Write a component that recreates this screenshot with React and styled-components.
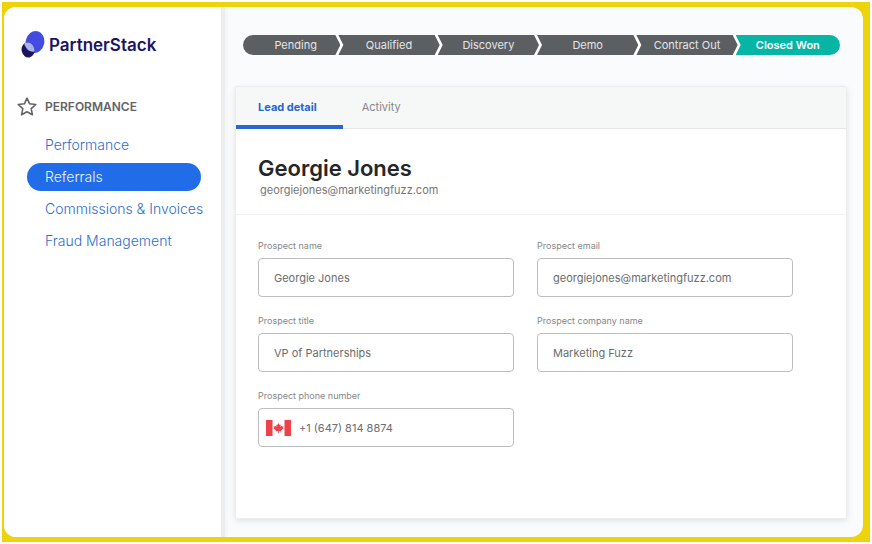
import { useState } from "react";
import styled, { createGlobalStyle } from "styled-components";

const GlobalStyle = createGlobalStyle`
  *, *::before, *::after { box-sizing: border-box; }
  body { margin: 0; background: #fff; font-family: Inter, "Liberation Sans", sans-serif; }
  button, input { font-family: inherit; }
`;

const Frame = styled.div`
  display: flex;
  min-height: calc(100vh - 4px);
  margin: 2px;
  padding: 5px 7px 5px 2px;
  background: #edd30c;
`;

const Shell = styled.div`
  flex: 1;
  display: flex;
  border-radius: 12px;
  overflow: hidden;
  background: #fafbfd;
`;

const Sidebar = styled.aside`
  flex: 0 0 221px;
  min-width: 0;
  padding: 24px 20px 24px 13px;
  background: #fff;
  border-right: 4px solid #ecedee;
  box-shadow: 0 0 6px rgba(0, 0, 0, 0.06);
`;

const Brand = styled.a`
  display: flex;
  align-items: center;
  gap: 4px;
  margin-left: 4px;
  color: #1b1464;
  font-size: 17px;
  font-weight: 600;
  line-height: 26px;
  text-decoration: none;
`;

const SectionTitle = styled.h2`
  display: flex;
  align-items: center;
  gap: 8px;
  margin: 39px 0 0;
  color: #636465;
  font-size: 12px;
  font-weight: 600;
  line-height: 20px;
`;

const NavList = styled.ul`
  display: flex;
  flex-direction: column;
  gap: 4px;
  margin: 14px 0 0;
  padding: 0 0 0 10px;
  list-style: none;
`;

const NavLink = styled.a`
  display: block;
  padding: 0 0 0 18px;
  border-radius: 14px;
  background: ${(p) => (p.$active ? "#216de9" : "transparent")};
  color: ${(p) => (p.$active ? "#eef4ff" : "#2e6ecb")};
  font-size: 14px;
  font-weight: 300;
  line-height: 28px;
  white-space: nowrap;
  text-decoration: none;
`;

const Main = styled.main`
  flex: 1;
  min-width: 0;
  display: flex;
  flex-direction: column;
  gap: 31px;
  padding: 28px 16px 18px 10px;
`;

const Steps = styled.ol`
  display: flex;
  margin: 0 7px 0 8px;
  padding: 0;
  border-radius: 10px;
  overflow: hidden;
  background: #fff;
  list-style: none;
`;

const Step = styled.li`
  flex: 102 1 0;
  margin-left: -2px;
  background: ${(p) => (p.$won ? "#07b5a5" : "#5c5f62")};
  color: ${(p) => (p.$won ? "#fff" : "#e4e5e6")};
  font-size: 11px;
  font-weight: ${(p) => (p.$won ? 600 : 400)};
  line-height: 20px;
  text-align: center;
  white-space: nowrap;
  clip-path: polygon(0 0, calc(100% - 5px) 0, 100% 50%, calc(100% - 5px) 100%, 0 100%, 5px 50%);

  &:first-child {
    flex-grow: 98;
    margin-left: 0;
    text-indent: 8px;
    clip-path: polygon(0 0, calc(100% - 5px) 0, 100% 50%, calc(100% - 5px) 100%, 0 100%);
  }
  &:last-child {
    flex-grow: 105;
    clip-path: polygon(0 0, 100% 0, 100% 100%, 0 100%, 5px 50%);
  }
`;

const Card = styled.section`
  flex: 1;
  border: 1px solid #eceded;
  border-radius: 2px;
  background: #fff;
  box-shadow: 0 2px 6px rgba(0, 0, 0, 0.1);
`;

const Tabs = styled.div`
  display: flex;
  border-bottom: 1px solid #e6e7e8;
  background: #f6f7f7;
`;

const Tab = styled.button`
  height: 42px;
  margin: 0 0 -1px;
  padding: 1px ${(p) => (p.$active ? 26 : 19)}px 0 ${(p) => (p.$active ? 22 : 19)}px;
  border: 0;
  border-bottom: 4px solid ${(p) => (p.$active ? "#2a66cf" : "transparent")};
  background: none;
  color: ${(p) => (p.$active ? "#2a66cf" : "#868788")};
  font-size: 11px;
  font-weight: ${(p) => (p.$active ? 700 : 400)};
`;

const LeadHeader = styled.header`
  padding: 25px 22px 16px;
  border-bottom: 1px solid #f0f1f1;
`;

const LeadName = styled.h1`
  margin: 0;
  color: #252627;
  font-size: 22px;
  font-weight: 600;
  line-height: 28px;
`;

const LeadEmail = styled.p`
  margin: 0;
  padding-left: 2px;
  color: #757677;
  font-size: 11px;
  line-height: 16px;
`;

const Form = styled.form`
  display: grid;
  grid-template-columns: 1fr 1fr;
  gap: 18px 23px;
  padding: 25px 53px 24px 22px;
`;

const Field = styled.div`
  display: flex;
  flex-direction: column;
  gap: 6px;
`;

const Label = styled.label`
  color: #858687;
  font-size: 9px;
  line-height: 12px;
`;

const InputBox = styled.div`
  display: flex;
  align-items: center;
  gap: 8px;
  height: 39px;
  padding: 0 15px 0 ${(p) => (p.$withFlag ? 7 : 15)}px;
  border: 1px solid #bcbdbe;
  border-radius: 4px;
`;

const Input = styled.input`
  flex: 1;
  min-width: 0;
  padding: 0;
  border: 0;
  outline: 0;
  background: none;
  color: #6b6c6d;
  font-size: 11px;
  line-height: 16px;
`;

function LogoMark() {
  return (
    <svg width="24" height="27" viewBox="0 0 24 27" aria-hidden="true">
      <defs>
        <clipPath id="big-drop">
          <ellipse cx="14" cy="11" rx="9.3" ry="11" transform="rotate(12 14 11)" />
        </clipPath>
      </defs>
      <ellipse cx="14" cy="11" rx="9.3" ry="11" transform="rotate(12 14 11)" fill="#444be0" />
      <ellipse cx="7" cy="19" rx="6.4" ry="7.6" transform="rotate(-12 7 19)" fill="#1b1659" />
      <ellipse cx="7" cy="19" rx="6.4" ry="7.6" transform="rotate(-12 7 19)" fill="#a6b6ec" clipPath="url(#big-drop)" />
    </svg>
  );
}

function StarIcon() {
  return (
    <svg width="20" height="20" viewBox="0 0 20 20" fill="none" stroke="#636465" strokeWidth="1.6" strokeLinejoin="round" aria-hidden="true">
      <path d="M10 1.2 12.6 6.8 18.8 7.5 14.2 11.7 15.4 17.8 10 14.8 4.6 17.8 5.8 11.7 1.2 7.5 7.4 6.8Z" />
    </svg>
  );
}

function CanadaFlag() {
  return (
    <svg width="25" height="16" viewBox="0 0 25 16" role="img" aria-label="Canada">
      <path fill="#ee4248" d="M0 0h6.5v16H0zM18.5 0H25v16h-6.5z" />
      <path fill="#ee4248" d="M12.5 3l1.1 2 1.1-.5-.4 2.4 1.3-1.2.4.8 1.4-.2-.5 1.5.7.5-2.6 2.2.2.9-2.3-.3V13h-.8v-1.9l-2.3.3.2-.9-2.6-2.2.7-.5-.5-1.5 1.4.2.4-.8 1.3 1.2-.4-2.4 1.1.5z" />
    </svg>
  );
}

const navItems = ["Performance", "Referrals", "Commissions & Invoices", "Fraud Management"];
const steps = ["Pending", "Qualified", "Discovery", "Demo", "Contract Out", "Closed Won"];
const tabs = ["Lead detail", "Activity"];
const fields = [
  { id: "name", label: "Prospect name", value: "Georgie Jones" },
  { id: "email", label: "Prospect email", value: "georgiejones@marketingfuzz.com", type: "email" },
  { id: "title", label: "Prospect title", value: "VP of Partnerships" },
  { id: "company", label: "Prospect company name", value: "Marketing Fuzz" },
  { id: "phone", label: "Prospect phone number", value: "+1 (647) 814 8874", type: "tel", flag: true },
];

export default function App() {
  const [tab, setTab] = useState("Lead detail");

  return (
    <>
      <GlobalStyle />
      <Frame>
        <Shell>
          <Sidebar>
            <Brand href="#">
              <LogoMark />
              PartnerStack
            </Brand>
            <SectionTitle>
              <StarIcon />
              PERFORMANCE
            </SectionTitle>
            <nav>
              <NavList>
                {navItems.map((item) => (
                  <li key={item}>
                    <NavLink href="#" $active={item === "Referrals"}>{item}</NavLink>
                  </li>
                ))}
              </NavList>
            </nav>
          </Sidebar>
          <Main>
            <Steps>
              {steps.map((step) => (
                <Step key={step} $won={step === "Closed Won"}>{step}</Step>
              ))}
            </Steps>
            <Card>
              <Tabs role="tablist">
                {tabs.map((name) => (
                  <Tab key={name} type="button" role="tab" aria-selected={tab === name} $active={tab === name} onClick={() => setTab(name)}>
                    {name}
                  </Tab>
                ))}
              </Tabs>
              <LeadHeader>
                <LeadName>Georgie Jones</LeadName>
                <LeadEmail>georgiejones@marketingfuzz.com</LeadEmail>
              </LeadHeader>
              <Form>
                {fields.map((f) => (
                  <Field key={f.id}>
                    <Label htmlFor={f.id}>{f.label}</Label>
                    <InputBox $withFlag={f.flag}>
                      {f.flag && <CanadaFlag />}
                      <Input id={f.id} type={f.type || "text"} defaultValue={f.value} />
                    </InputBox>
                  </Field>
                ))}
              </Form>
            </Card>
          </Main>
        </Shell>
      </Frame>
    </>
  );
}
